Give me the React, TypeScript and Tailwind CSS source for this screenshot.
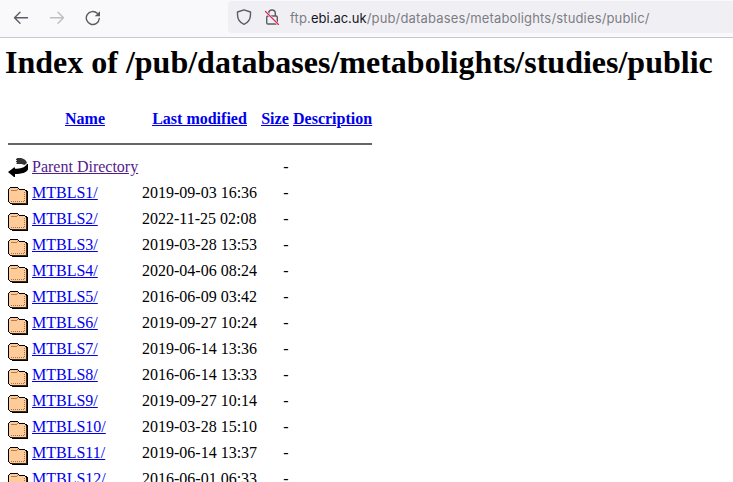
import React from "react";

const serif = "font-['Liberation_Serif','Times_New_Roman',serif]";

const rows: [string, string][] = [
  ["MTBLS1/", "2019-09-03 16:36"],
  ["MTBLS2/", "2022-11-25 02:08"],
  ["MTBLS3/", "2019-03-28 13:53"],
  ["MTBLS4/", "2020-04-06 08:24"],
  ["MTBLS5/", "2016-06-09 03:42"],
  ["MTBLS6/", "2019-09-27 10:24"],
  ["MTBLS7/", "2019-06-14 13:36"],
  ["MTBLS8/", "2016-06-14 13:33"],
  ["MTBLS9/", "2019-09-27 10:14"],
  ["MTBLS10/", "2019-03-28 15:10"],
  ["MTBLS11/", "2019-06-14 13:37"],
  ["MTBLS12/", "2016-06-01 06:33"],
];

function FolderIcon() {
  return (
    <svg width="20" height="22" viewBox="0 0 20 22" shapeRendering="crispEdges">
      <path d="M2 3h8v1h1v1h6v1h2v1h1v14H4v-1H2v-1H1v-1H0V5h1V4h1z" fill="#000" />
      <path d="M2 4h8v1h1v1h6v1h1v12H2v-1H1V5h1z" fill="#ffcc99" />
      <path d="M3 6h6v1H3zM9 5h1v1H9z" fill="#b37a47" />
      <path d="M3 17.500h14M16.500 8v9" stroke="#a8733f" strokeDasharray="1 1" fill="none" />
      <path d="M18 8h1v12H4v-1h14z" fill="#332b22" />
    </svg>
  );
}

function BackIcon() {
  return (
    <svg width="20" height="22" viewBox="0 0 20 22">
      <path d="M8 2h5c3 .5 5.500 2.500 6 5l-2.500 2-3-1H9L8 7z" fill="#333" />
      <path d="M8.500 2v6" stroke="#fff" strokeWidth=".8" strokeDasharray="1 1" />
      <path d="M20 8v5.500c-1.500 3-6 4.500-13 4.500v3H6l-6-5L6 11.500h1v1.300c5 0 10-1 12-4.800z" fill="#000" />
    </svg>
  );
}

function Toolbar() {
  return (
    <header className="flex h-[38px] shrink-0 border-b border-[#c8c8cb] bg-[#f9f9fb]">
      <div className="flex w-[228px] items-start gap-5 pl-[13px] pt-[10px] text-[#5b5b66]">
        <svg width="16" height="16" viewBox="0 0 16 16" fill="none" stroke="currentColor" strokeWidth="1.4" strokeLinecap="round" strokeLinejoin="round">
          <path d="M14.500 7.700H1.500M7 2.200 1.500 7.700 7 13.200" />
        </svg>
        <svg className="text-[#bdbdc2]" width="16" height="16" viewBox="0 0 16 16" fill="none" stroke="currentColor" strokeWidth="1.4" strokeLinecap="round" strokeLinejoin="round">
          <path d="M1.500 7.700h13M9 2.200l5.500 5.500L9 13.200" />
        </svg>
        <svg width="16" height="16" viewBox="0 0 16 16" fill="none" stroke="currentColor" strokeWidth="1.400" strokeLinecap="round">
          <path d="M14.300 8.500A6.500 6.500 0 1 1 12.300 3.300" />
          <path d="M15 1.300v5H9.700z" fill="currentColor" stroke="none" />
        </svg>
      </div>
      <div className="mt-px flex h-8 flex-1 items-center rounded-l bg-[#f0f0f4] pl-2 text-[#5b5b66]">
        <svg width="16" height="16" viewBox="0 0 16 16" fill="none" stroke="currentColor" strokeWidth="1.400" strokeLinejoin="round">
          <path d="M8 .8 14.500 3v2.500C14.500 10 12.300 13.500 8 15.300 3.700 13.500 1.500 10 1.500 5.500V3z" />
        </svg>
        <svg className="ml-3" width="16" height="16" viewBox="0 0 16 16" fill="none">
          <g stroke="#5b5b66" strokeWidth="1.400">
            <path d="M4.700 7V4.300a3.300 3.300 0 0 1 6.600 0V7" />
            <rect x="2.700" y="7" width="10.600" height="8" rx="1.300" />
          </g>
          <path d="M1.500 2.500 14.500 15.500" stroke="#f0f0f4" strokeWidth="2.400" />
          <path d="M1.500 2.500 14.500 15.500" stroke="#e22850" strokeWidth="1.200" strokeLinecap="round" />
        </svg>
        <span className="ml-[10px] pt-[2px] whitespace-nowrap font-['Inter',sans-serif] text-[13px] leading-4 tracking-[0.155px] text-[#7d7d84]">
          ftp.<span className="tracking-normal text-[#15141a]">ebi.ac.uk</span>/pub/databases/metabolights/studies/public/
        </span>
      </div>
    </header>
  );
}

const line = "grid grid-cols-[20px_106px_115px_28px_79px] gap-x-1";

export default function App() {
  return (
    <div className={`flex h-[482px] w-[733px] flex-col overflow-hidden bg-white text-black ${serif}`}>
      <Toolbar />
      <h1 className="mt-[6px] h-[37px] shrink-0 whitespace-nowrap pl-[5px] text-[32px] leading-[37px] font-bold">
        Index of /pub/databases/metabolights/studies/public
      </h1>
      <main className="w-[372px] pl-2 pt-[29px] text-base leading-[18px]">
        <div className={`${line} h-[33px] text-center font-bold whitespace-nowrap text-[#0000ee] underline`}>
          <span />
          <a>Name</a>
          <a>Last modified</a>
          <a>Size</a>
          <a>Description</a>
        </div>
        <hr className="mb-[10px] h-[2px] border-0 bg-[#666]" />
        <div className={`${line} h-[26px]`}>
          <span className="pt-px"><BackIcon /></span>
          <a className="pt-[3px] whitespace-nowrap text-[#551a8b] underline">Parent Directory</a>
          <span />
          <span className="pt-[3px] pr-[0.5px] text-right">-</span>
        </div>
        {rows.map(([name, date]) => (
          <div key={name} className={`${line} h-[26px]`}>
            <span className="pt-[3px]"><FolderIcon /></span>
            <a className="pt-[3px] text-[#0000ee] underline">{name}</a>
            <span className="pt-[3px] whitespace-nowrap">{date}</span>
            <span className="pt-[3px] pr-[0.5px] text-right">-</span>
          </div>
        ))}
      </main>
    </div>
  );
}
